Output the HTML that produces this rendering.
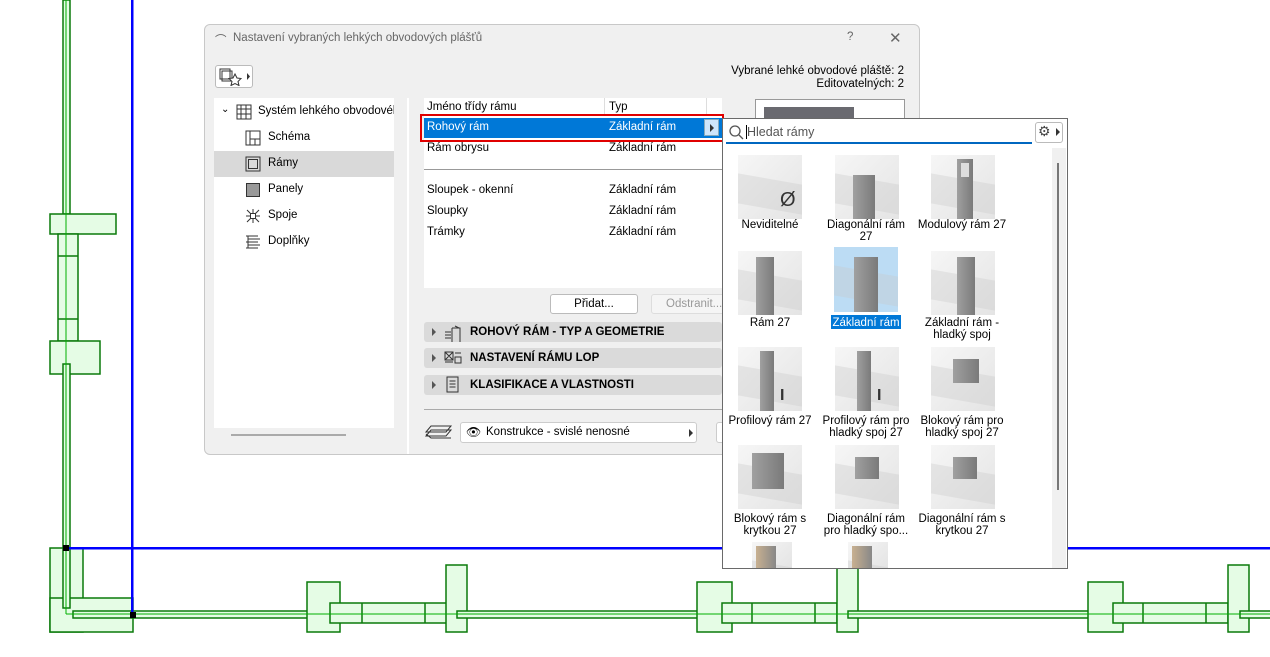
<!DOCTYPE html>
<html><head><meta charset="utf-8"><style>
*{margin:0;padding:0;box-sizing:border-box}
body{width:1270px;height:657px;background:#fff;position:relative;overflow:hidden;font-family:"Liberation Sans",sans-serif;font-size:11.5px;color:#000}
.a{position:absolute}
.t{position:absolute;white-space:nowrap;font-size:11.5px}
.sec{position:absolute;left:424px;width:298px;height:20px;background:#dadada;border-radius:3px}
.sec b{position:absolute;left:46px;top:4px;font-size:11.5px}
.sec i{position:absolute;left:8px;top:6px;width:0;height:0;border-left:4px solid #555;border-top:4px solid transparent;border-bottom:4px solid transparent}
.th{position:absolute;width:64px;height:64px;background:linear-gradient(135deg,#f6f6f6,#e4e4e4);overflow:hidden}
.th::before{content:"";position:absolute;left:0;top:24px;width:64px;height:30px;background:rgba(200,200,200,.35);transform:skewY(10deg)}
.th .p{position:absolute;background:linear-gradient(90deg,#a0a0a0,#7a7a7a)}
.lb{position:absolute;width:96px;text-align:center;font-size:11.5px;line-height:12px}
</style></head><body>
<svg class="a" style="left:0;top:0" width="1270" height="657">
<g fill="#e5fce5" stroke="#0a7a0a" stroke-width="1.5">
<rect x="63" y="0" width="7" height="214"/>
<rect x="50" y="214" width="66" height="20"/>
<rect x="58" y="234" width="20" height="107"/>
<line x1="58" y1="256" x2="78" y2="256"/><line x1="58" y1="319" x2="78" y2="319"/>
<rect x="50" y="341" width="50" height="33"/>
<rect x="63" y="364" width="7" height="244"/>
<rect x="50" y="548" width="33" height="84"/>
<rect x="50" y="598" width="83" height="34"/>
<rect x="63" y="548" width="7" height="60"/>
<rect x="73" y="611" width="244" height="7"/>
<rect x="307" y="582" width="33" height="50"/>
<rect x="330" y="603" width="117" height="20"/>
<line x1="362" y1="603" x2="362" y2="623"/><line x1="425" y1="603" x2="425" y2="623"/>
<rect x="446" y="565" width="21" height="67"/>
<rect x="457" y="611" width="250" height="7"/>
<rect x="697" y="582" width="35" height="50"/>
<rect x="722" y="603" width="115" height="20"/>
<line x1="752" y1="603" x2="752" y2="623"/><line x1="815" y1="603" x2="815" y2="623"/>
<rect x="837" y="565" width="21" height="67"/>
<rect x="848" y="611" width="250" height="7"/>
<rect x="1088" y="582" width="35" height="50"/>
<rect x="1113" y="603" width="115" height="20"/>
<line x1="1143" y1="603" x2="1143" y2="623"/><line x1="1206" y1="603" x2="1206" y2="623"/>
<rect x="1228" y="565" width="21" height="67"/>
<rect x="1240" y="611" width="40" height="7"/>
</g>
<g stroke="#00b000" stroke-width="1"><line x1="66" y1="0" x2="66" y2="614"/><line x1="66" y1="614" x2="1270" y2="614"/></g>
<rect x="131" y="0" width="2.5" height="615" fill="#0000ff"/>
<rect x="66" y="547" width="1204" height="2.5" fill="#0000ff"/>
<rect x="63" y="545" width="6" height="6" fill="#000"/><rect x="130" y="612" width="6" height="6" fill="#000"/>
</svg>

<div class="a" style="left:204px;top:24px;width:716px;height:431px;background:#f0f0f0;border:1px solid #c8c8c8;border-radius:6px"></div>
<div class="t" style="left:215px;top:32px;color:#666">⌒</div>
<div class="t" style="left:233px;top:32px;color:#666">Nastavení vybraných lehkých obvodových plášťů</div>
<div class="t" style="left:847px;top:31px;color:#666">?</div>
<div class="t" style="left:889px;top:29px;color:#666;font-size:15px">✕</div>
<div class="a" style="left:215px;top:65px;width:38px;height:23px;background:#fff;border:1px solid #bbb;border-radius:3px"></div>
<svg class="a" style="left:219px;top:68px" width="32" height="18"><rect x="1" y="1" width="10" height="10" fill="none" stroke="#333"/><rect x="3" y="3" width="10" height="10" fill="none" stroke="#333"/><path d="M16 6l2 4 4 .5-3 3 1 4-4-2-4 2 1-4-3-3 4-.5z" fill="#fff" stroke="#333"/><path d="M28 5v7l3-3.5z" fill="#333"/></svg>
<div class="t" style="right:366px;top:65px">Vybrané lehké obvodové pláště: 2</div>
<div class="t" style="right:366px;top:78px">Editovatelných: 2</div>

<div class="a" style="left:214px;top:98px;width:180px;height:330px;background:#fff"></div>
<div class="a" style="left:214px;top:151px;width:180px;height:26px;background:#d9d9d9"></div>
<div class="t" style="left:221px;top:104px;font-size:10px">⌄</div>
<svg class="a" style="left:236px;top:104px" width="16" height="16"><path d="M1 1h14v14H1zM1 5h14M1 10h14M5 1v14M10 1v14" fill="none" stroke="#333"/></svg>
<div class="t" style="left:258px;top:105px;width:136px;overflow:hidden">Systém lehkého obvodovél</div>
<svg class="a" style="left:245px;top:130px" width="16" height="16"><path d="M1 1h14v14H1zM5 1v14M5 9h10M10 9v6" fill="none" stroke="#333"/></svg>
<div class="t" style="left:268px;top:131px">Schéma</div>
<svg class="a" style="left:245px;top:156px" width="16" height="16"><path d="M1 1h14v14H1zM3.5 3.5h9v9h-9z" fill="none" stroke="#333"/></svg>
<div class="t" style="left:268px;top:157px">Rámy</div>
<svg class="a" style="left:245px;top:182px" width="16" height="16"><rect x="1.5" y="1.5" width="13" height="13" fill="#999" stroke="#333"/></svg>
<div class="t" style="left:268px;top:183px">Panely</div>
<svg class="a" style="left:245px;top:208px" width="16" height="16"><path d="M2 2l12 12M14 2L2 14M8 1v14M1 8h14" stroke="#333" fill="none"/><rect x="5.5" y="5.5" width="5" height="5" fill="#fff" stroke="#333"/></svg>
<div class="t" style="left:268px;top:209px">Spoje</div>
<svg class="a" style="left:245px;top:234px" width="16" height="16"><path d="M1 2h12M3 5h12M1 8h12M3 11h12M1 14h12M3 2v12" stroke="#333" fill="none"/></svg>
<div class="t" style="left:268px;top:235px">Doplňky</div>
<div class="a" style="left:231px;top:434px;width:115px;height:2px;background:#aaa"></div>
<div class="a" style="left:407px;top:98px;width:2px;height:356px;background:#fff"></div>

<div class="a" style="left:424px;top:98px;width:298px;height:190px;background:#fff"></div>
<div class="a" style="left:604px;top:98px;width:1px;height:18px;background:#ddd"></div>
<div class="a" style="left:706px;top:98px;width:1px;height:18px;background:#ddd"></div>
<div class="t" style="left:427px;top:101px">Jméno třídy rámu</div>
<div class="t" style="left:609px;top:101px">Typ</div>
<div class="a" style="left:424px;top:118px;width:298px;height:20px;background:#0078d7"></div>
<div class="a" style="left:420px;top:114px;width:304px;height:28px;border:2.5px solid #e00000"></div>
<div class="a" style="left:704px;top:119px;width:15px;height:17px;background:#cfe6fb;border:1px solid #8ab"></div>
<div class="a" style="left:710px;top:124px;border-left:4px solid #333;border-top:4px solid transparent;border-bottom:4px solid transparent"></div>
<div class="t" style="left:427px;top:121px;color:#fff">Rohový rám</div>
<div class="t" style="left:609px;top:121px;color:#fff">Základní rám</div>
<div class="t" style="left:427px;top:142px">Rám obrysu</div><div class="t" style="left:609px;top:142px">Základní rám</div>
<div class="a" style="left:424px;top:169px;width:298px;height:1px;background:#999"></div>
<div class="t" style="left:427px;top:184px">Sloupek - okenní</div><div class="t" style="left:609px;top:184px">Základní rám</div>
<div class="t" style="left:427px;top:205px">Sloupky</div><div class="t" style="left:609px;top:205px">Základní rám</div>
<div class="t" style="left:427px;top:226px">Trámky</div><div class="t" style="left:609px;top:226px">Základní rám</div>
<div class="a" style="left:550px;top:294px;width:88px;height:20px;background:#fff;border:1px solid #bbb;border-radius:3px;text-align:center;line-height:18px">Přidat...</div>
<div class="a" style="left:651px;top:294px;width:75px;height:20px;background:#f5f5f5;border:1px solid #ddd;border-radius:3px;padding-left:14px;line-height:18px;color:#999;overflow:hidden;white-space:nowrap">Odstranit...</div>
<div class="sec" style="top:322px"><i></i><b>ROHOVÝ RÁM - TYP A GEOMETRIE</b></div>
<div class="sec" style="top:348px"><i></i><b>NASTAVENÍ RÁMU LOP</b></div>
<div class="sec" style="top:375px"><i></i><b>KLASIFIKACE A VLASTNOSTI</b></div>
<svg class="a" style="left:443px;top:324px" width="20" height="70"><path d="M2 8h6M2 11h6M2 14h6M9 4h8v14M9 4v14M12 2l4 2" stroke="#333" fill="none"/><path d="M2 28h8v8H2zM2 28l8 8M10 28l-8 8M12 29h6M12 33h6v6h-6zM2 38h8" stroke="#333" fill="none"/><path d="M4 53h11v15H4zM6.5 57h6M6.5 60h6M6.5 63h6" stroke="#333" fill="none"/></svg>
<div class="a" style="left:424px;top:409px;width:298px;height:1px;background:#aaa"></div>
<svg class="a" style="left:425px;top:424px" width="28" height="16"><path d="M6 2h20l-5 6H1zM6 6h20l-5 6H1zM1 10l5 4h20" fill="none" stroke="#333"/></svg>
<div class="a" style="left:460px;top:422px;width:237px;height:21px;background:#fff;border:1px solid #ccc;border-radius:3px"></div>
<div class="t" style="left:466px;top:425px;font-size:12px">👁</div>
<div class="t" style="left:486px;top:426px">Konstrukce - svislé nenosné</div>
<div class="a" style="left:689px;top:429px;border-left:4px solid #333;border-top:4px solid transparent;border-bottom:4px solid transparent"></div>
<div class="a" style="left:716px;top:422px;width:10px;height:21px;background:#fff;border:1px solid #ccc;border-radius:3px"></div>
<div class="a" style="left:755px;top:99px;width:150px;height:30px;background:#fff;border:1px solid #999"></div>
<div class="a" style="left:764px;top:107px;width:90px;height:12px;background:#6a6a70"></div>

<div class="a" style="left:722px;top:118px;width:346px;height:451px;background:#fff;border:1px solid #6a6a6a"></div>
<div class="a" style="left:1052px;top:148px;width:14px;height:420px;background:#f0f0f0"></div>
<div class="a" style="left:1057px;top:163px;width:2px;height:327px;background:#777"></div>
<div class="a" style="left:726px;top:122px;width:306px;height:22px;background:#fff;border-bottom:2px solid #0067c0"></div>
<svg class="a" style="left:728px;top:124px" width="16" height="16"><circle cx="7" cy="7" r="5" fill="none" stroke="#555" stroke-width="1.3"/><path d="M11 11l4 4" stroke="#555" stroke-width="1.3"/></svg>
<div class="a" style="left:746px;top:125px;width:1px;height:14px;background:#000"></div>
<div class="t" style="left:747px;top:125px;font-size:12.5px;color:#555">Hledat rámy</div>
<div class="a" style="left:1035px;top:122px;width:28px;height:21px;background:#fff;border:1px solid #bbb;border-radius:3px"></div>
<div class="t" style="left:1038px;top:123px;font-size:14px;color:#444">⚙</div>
<div class="a" style="left:1056px;top:128px;border-left:4px solid #333;border-top:4px solid transparent;border-bottom:4px solid transparent"></div>

<div class="th" style="left:738px;top:155px"><div class="t" style="left:42px;top:34px;font-size:20px;color:#333">Ø</div></div>
<div class="th" style="left:835px;top:155px"><div class="p" style="left:18px;top:20px;width:22px;height:44px"></div></div>
<div class="th" style="left:931px;top:155px"><div class="p" style="left:26px;top:4px;width:16px;height:60px"></div><div class="a" style="left:30px;top:8px;width:8px;height:14px;background:#ddd"></div></div>
<div class="lb" style="left:722px;top:219px">Neviditelné</div>
<div class="lb" style="left:818px;top:219px">Diagonální rám<br>27</div>
<div class="lb" style="left:914px;top:219px">Modulový rám 27</div>
<div class="th" style="left:738px;top:251px"><div class="p" style="left:18px;top:6px;width:18px;height:58px"></div></div>
<div class="th" style="left:834px;top:247px;background:#bcdcf4;height:65px"><div class="p" style="left:20px;top:10px;width:24px;height:55px"></div></div>
<div class="th" style="left:931px;top:251px"><div class="p" style="left:26px;top:6px;width:18px;height:58px"></div></div>
<div class="lb" style="left:722px;top:317px">Rám 27</div>
<div class="a" style="left:831px;top:315px;width:70px;height:14px;background:#0078d7"></div>
<div class="lb" style="left:818px;top:317px;color:#fff">Základní rám</div>
<div class="lb" style="left:914px;top:317px">Základní rám -<br>hladký spoj</div>
<div class="th" style="left:738px;top:347px"><div class="p" style="left:22px;top:4px;width:14px;height:60px"></div><div class="t" style="left:42px;top:40px;font-size:16px;color:#333;font-weight:bold">I</div></div>
<div class="th" style="left:835px;top:347px"><div class="p" style="left:22px;top:4px;width:14px;height:60px"></div><div class="t" style="left:42px;top:40px;font-size:16px;color:#333;font-weight:bold">I</div></div>
<div class="th" style="left:931px;top:347px"><div class="p" style="left:22px;top:12px;width:26px;height:24px"></div></div>
<div class="lb" style="left:722px;top:415px">Profilový rám 27</div>
<div class="lb" style="left:818px;top:415px">Profilový rám pro<br>hladký spoj 27</div>
<div class="lb" style="left:914px;top:415px">Blokový rám pro<br>hladký spoj 27</div>
<div class="th" style="left:738px;top:445px"><div class="p" style="left:14px;top:8px;width:32px;height:36px"></div></div>
<div class="th" style="left:835px;top:445px"><div class="p" style="left:20px;top:12px;width:24px;height:22px"></div></div>
<div class="th" style="left:931px;top:445px"><div class="p" style="left:22px;top:12px;width:24px;height:22px"></div></div>
<div class="lb" style="left:722px;top:513px">Blokový rám s<br>krytkou 27</div>
<div class="lb" style="left:818px;top:513px">Diagonální rám<br>pro hladký spo...</div>
<div class="lb" style="left:914px;top:513px">Diagonální rám s<br>krytkou 27</div>
<div class="th" style="left:752px;top:542px;width:40px;height:26px"><div class="a" style="left:4px;top:4px;width:20px;height:22px;background:linear-gradient(90deg,#c8b090,#888)"></div></div>
<div class="th" style="left:848px;top:542px;width:40px;height:26px"><div class="a" style="left:4px;top:4px;width:20px;height:22px;background:linear-gradient(90deg,#c8b090,#888)"></div></div>
</body></html>
